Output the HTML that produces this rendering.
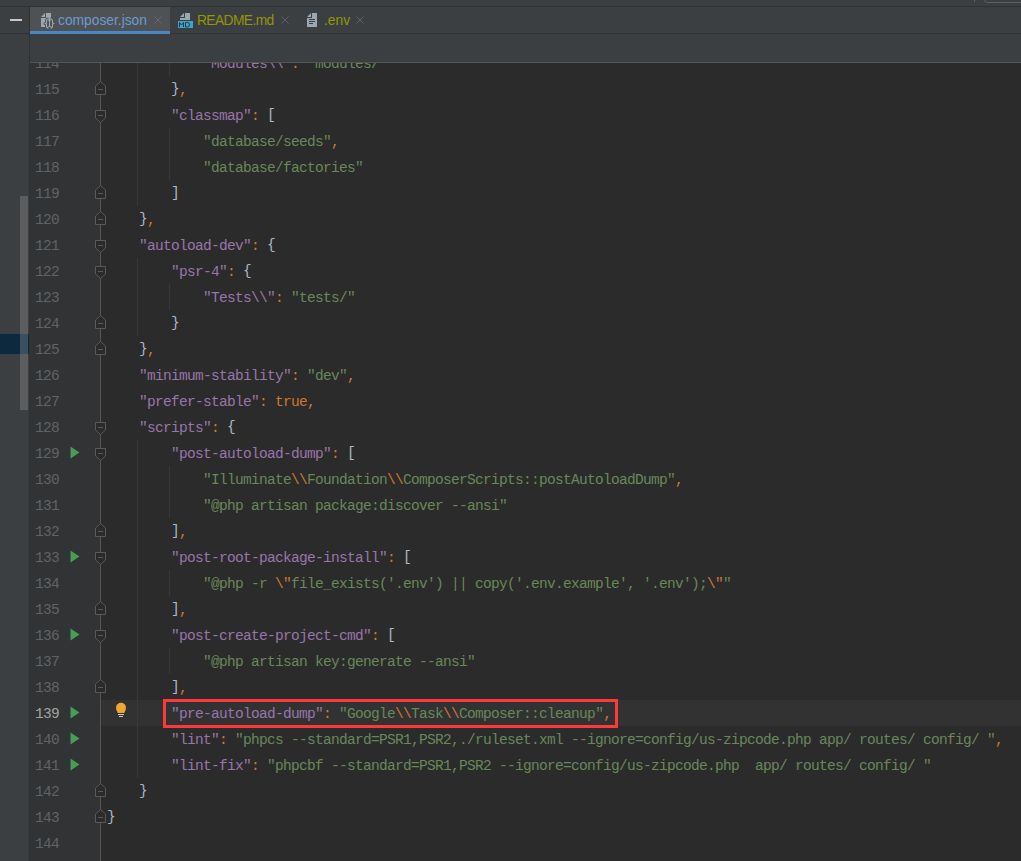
<!DOCTYPE html>
<html><head><meta charset="utf-8"><style>
*{margin:0;padding:0;box-sizing:border-box}
html,body{width:1021px;height:861px;overflow:hidden;background:#2b2b2b;position:relative}
.abs{position:absolute}
.ln{position:absolute;height:26px;line-height:26px;white-space:pre;font-family:"Liberation Mono",monospace;font-size:14.5px;letter-spacing:-0.701px}
.num{position:absolute;left:35px;width:24px;height:26px;line-height:26px;text-align:right;font-family:"Liberation Mono",monospace;font-size:14.5px;letter-spacing:-0.701px}
.tab{position:absolute;top:7.5px;height:26px;font-family:"Liberation Sans",sans-serif;font-size:13.8px;line-height:26px;white-space:pre}
</style></head><body>
<div class="abs" style="left:0;top:0;width:1021px;height:62px;background:#3c3f41"></div>
<div class="abs" style="left:0;top:6px;width:1021px;height:1px;background:#323232"></div>
<div class="abs" style="left:0;top:33px;width:1021px;height:1px;background:#323232"></div>
<div class="abs" style="left:0;top:62px;width:1021px;height:1px;background:#555555"></div>
<div class="abs" style="left:0;top:34px;width:29px;height:827px;background:#3c3f41"></div>
<div class="abs" style="left:29px;top:7px;width:1px;height:854px;background:#303030"></div>
<div class="abs" style="left:30px;top:63px;width:71px;height:798px;background:#313335"></div>
<div class="abs" style="left:101px;top:700px;width:920px;height:26px;background:#323232"></div>
<!-- active tab -->
<div class="abs" style="left:30px;top:7px;width:140px;height:24px;background:#4e5254"></div>
<div class="abs" style="left:30px;top:31px;width:140px;height:3px;background:#4a88c7"></div>
<div class="abs" style="left:10px;top:19px;width:12px;height:2px;background:#c8c8c8"></div>
<!-- left panel scrollbar -->
<div class="abs" style="left:20px;top:196px;width:8px;height:214px;background:#5c5d5f"></div>
<div class="abs" style="left:0;top:334px;width:29px;height:20px;background:#0d293e"></div>
<div class="abs" style="left:20px;top:334px;width:8px;height:20px;background:#3a4f5f"></div>
<div class="tab" style="left:58px;color:#6a9bd0">composer.json</div>
<div class="tab" style="left:197px;color:#959505;letter-spacing:-0.6px">README.md</div>
<div class="tab" style="left:324px;color:#959505">.env</div>
<svg class="abs" style="left:0;top:0" width="1021" height="861" viewBox="0 0 1021 861">
<rect x="100" y="63" width="1" height="798" fill="#555555"/>
<path d="M95.5 110.5 H105.5 V118.0 L100.5 122.5 L95.5 118.0 Z" fill="#2b2b2b" stroke="#5a5a5a"/>
<rect x="98" y="115" width="5" height="1" fill="#5a5a5a"/>
<path d="M95.5 240.5 H105.5 V248.0 L100.5 252.5 L95.5 248.0 Z" fill="#2b2b2b" stroke="#5a5a5a"/>
<rect x="98" y="245" width="5" height="1" fill="#5a5a5a"/>
<path d="M95.5 266.5 H105.5 V274.0 L100.5 278.5 L95.5 274.0 Z" fill="#2b2b2b" stroke="#5a5a5a"/>
<rect x="98" y="271" width="5" height="1" fill="#5a5a5a"/>
<path d="M95.5 422.5 H105.5 V430.0 L100.5 434.5 L95.5 430.0 Z" fill="#2b2b2b" stroke="#5a5a5a"/>
<rect x="98" y="427" width="5" height="1" fill="#5a5a5a"/>
<path d="M95.5 448.5 H105.5 V456.0 L100.5 460.5 L95.5 456.0 Z" fill="#2b2b2b" stroke="#5a5a5a"/>
<rect x="98" y="453" width="5" height="1" fill="#5a5a5a"/>
<path d="M95.5 552.5 H105.5 V560.0 L100.5 564.5 L95.5 560.0 Z" fill="#2b2b2b" stroke="#5a5a5a"/>
<rect x="98" y="557" width="5" height="1" fill="#5a5a5a"/>
<path d="M95.5 630.5 H105.5 V638.0 L100.5 642.5 L95.5 638.0 Z" fill="#2b2b2b" stroke="#5a5a5a"/>
<rect x="98" y="635" width="5" height="1" fill="#5a5a5a"/>
<path d="M100.5 81.5 L105.5 86.0 V94.5 H95.5 V86.0 Z" fill="#2b2b2b" stroke="#5a5a5a"/>
<rect x="98" y="89" width="5" height="1" fill="#5a5a5a"/>
<path d="M100.5 185.5 L105.5 190.0 V198.5 H95.5 V190.0 Z" fill="#2b2b2b" stroke="#5a5a5a"/>
<rect x="98" y="193" width="5" height="1" fill="#5a5a5a"/>
<path d="M100.5 211.5 L105.5 216.0 V224.5 H95.5 V216.0 Z" fill="#2b2b2b" stroke="#5a5a5a"/>
<rect x="98" y="219" width="5" height="1" fill="#5a5a5a"/>
<path d="M100.5 315.5 L105.5 320.0 V328.5 H95.5 V320.0 Z" fill="#2b2b2b" stroke="#5a5a5a"/>
<rect x="98" y="323" width="5" height="1" fill="#5a5a5a"/>
<path d="M100.5 341.5 L105.5 346.0 V354.5 H95.5 V346.0 Z" fill="#2b2b2b" stroke="#5a5a5a"/>
<rect x="98" y="349" width="5" height="1" fill="#5a5a5a"/>
<path d="M100.5 523.5 L105.5 528.0 V536.5 H95.5 V528.0 Z" fill="#2b2b2b" stroke="#5a5a5a"/>
<rect x="98" y="531" width="5" height="1" fill="#5a5a5a"/>
<path d="M100.5 601.5 L105.5 606.0 V614.5 H95.5 V606.0 Z" fill="#2b2b2b" stroke="#5a5a5a"/>
<rect x="98" y="609" width="5" height="1" fill="#5a5a5a"/>
<path d="M100.5 679.5 L105.5 684.0 V692.5 H95.5 V684.0 Z" fill="#2b2b2b" stroke="#5a5a5a"/>
<rect x="98" y="687" width="5" height="1" fill="#5a5a5a"/>
<path d="M100.5 783.5 L105.5 788.0 V796.5 H95.5 V788.0 Z" fill="#2b2b2b" stroke="#5a5a5a"/>
<rect x="98" y="791" width="5" height="1" fill="#5a5a5a"/>
<path d="M100.5 809.5 L105.5 814.0 V822.5 H95.5 V814.0 Z" fill="#2b2b2b" stroke="#5a5a5a"/>
<rect x="98" y="817" width="5" height="1" fill="#5a5a5a"/>
<path d="M70.5 446.5 L79.5 452.5 L70.5 458.5 Z" fill="#499c54"/>
<path d="M70.5 550.5 L79.5 556.5 L70.5 562.5 Z" fill="#499c54"/>
<path d="M70.5 628.5 L79.5 634.5 L70.5 640.5 Z" fill="#499c54"/>
<path d="M70.5 706.5 L79.5 712.5 L70.5 718.5 Z" fill="#499c54"/>
<path d="M70.5 732.5 L79.5 738.5 L70.5 744.5 Z" fill="#499c54"/>
<path d="M70.5 758.5 L79.5 764.5 L70.5 770.5 Z" fill="#499c54"/>
<rect x="137" y="62" width="1" height="144" fill="#393939"/>
<rect x="169" y="62" width="1" height="14" fill="#393939"/>
<rect x="169" y="128" width="1" height="52" fill="#393939"/>
<rect x="137" y="258" width="1" height="78" fill="#393939"/>
<rect x="169" y="284" width="1" height="26" fill="#393939"/>
<rect x="137" y="440" width="1" height="338" fill="#393939"/>
<rect x="169" y="466" width="1" height="52" fill="#393939"/>
<rect x="169" y="570" width="1" height="26" fill="#393939"/>
<rect x="169" y="648" width="1" height="26" fill="#393939"/>

<!-- json icon -->
<path d="M41 17 L45 13 V17 Z" fill="#9aa7b0"/>
<rect x="46" y="13" width="5" height="5" fill="#9aa7b0"/>
<rect x="41" y="18" width="10" height="9" fill="#9aa7b0"/>
<g fill="none" stroke-linejoin="round">
<path d="M48.5 19 Q46.5 19 46.5 21 V22.5 Q46.5 23.5 45 23.5 Q46.5 23.5 46.5 24.5 V26 Q46.5 28 48.5 28 M50.5 19 Q52.5 19 52.5 21 V22.5 Q52.5 23.5 54 23.5 Q52.5 23.5 52.5 24.5 V26 Q52.5 28 50.5 28 M49.5 21 V26" stroke="#4e5254" stroke-width="3"/>
<path d="M48.5 19 Q46.5 19 46.5 21 V22.5 Q46.5 23.5 45 23.5 Q46.5 23.5 46.5 24.5 V26 Q46.5 28 48.5 28 M50.5 19 Q52.5 19 52.5 21 V22.5 Q52.5 23.5 54 23.5 Q52.5 23.5 52.5 24.5 V26 Q52.5 28 50.5 28 M49.5 21 V26" stroke="#9aa7b0" stroke-width="1.1"/>
</g>
<!-- md icon -->
<path d="M180 17 L184 13 V17 Z" fill="#9aa7b0"/>
<rect x="185" y="13" width="5" height="7" fill="#9aa7b0"/>
<rect x="180" y="18" width="10" height="2" fill="#9aa7b0"/>
<rect x="178" y="21" width="15" height="7" fill="#3ea3cb"/>
<path d="M179.5 27 V22.5 L181.5 25 L183.5 22.5 V27 M185.5 27 V22.5 H187.5 Q189.5 22.5 189.5 24.75 Q189.5 27 187.5 27 Z" fill="none" stroke="#233c4a" stroke-width="1"/>
<!-- env icon -->
<path d="M307 17 L311 13 V17 Z" fill="#9aa7b0"/>
<rect x="312" y="13" width="5" height="5" fill="#9aa7b0"/>
<rect x="307" y="18" width="10" height="9" fill="#9aa7b0"/>
<rect x="309" y="19" width="6" height="1" fill="#3c3f41"/>
<rect x="309" y="21" width="6" height="1" fill="#3c3f41"/>
<rect x="309" y="23" width="4" height="1" fill="#3c3f41"/>
<!-- close X -->
<path d="M154.5 16.5 L161.5 23.5 M161.5 16.5 L154.5 23.5" stroke="#66696b" stroke-width="1"/>
<path d="M281.5 16.5 L288.5 23.5 M288.5 16.5 L281.5 23.5" stroke="#5f6264" stroke-width="1"/>
<path d="M356.5 16.5 L363.5 23.5 M363.5 16.5 L356.5 23.5" stroke="#5f6264" stroke-width="1"/>
<!-- top right -->
<rect x="974" y="0" width="1" height="2" fill="#5e6060"/>
<rect x="984.5" y="-5.5" width="50" height="8" rx="3" fill="none" stroke="#5e6060"/>
<!-- lightbulb -->
<path d="M116 707.8 A5 5 0 0 1 126 707.8 Q126 710.3 124.2 713 H117.8 Q116 710.3 116 707.8 Z" fill="#f0a732"/>
<rect x="118" y="714" width="6" height="1" fill="#cfcfcf"/>
<rect x="119" y="716" width="4" height="1" fill="#cfcfcf"/>
<rect x="164.5" y="700.5" width="452" height="26" fill="none" stroke="#fc3a3a" stroke-width="3"/>
</svg>
<div class="ln" style="top:51px;left:203px"><span style="color:#9876aa">&quot;</span><span style="color:#9876aa">Modules</span><span style="color:#9876aa">\\</span><span style="color:#9876aa">&quot;</span><span style="color:#cc7832">:&nbsp;</span><span style="color:#6a8759">&quot;</span><span style="color:#6a8759">modules/</span><span style="color:#6a8759">&quot;</span></div>
<div class="num" style="top:51px;color:#606366">114</div>
<div class="ln" style="top:77px;left:171px"><span style="color:#a9b7c6;position:relative;top:-1px">}</span><span style="color:#cc7832">,</span></div>
<div class="num" style="top:77px;color:#606366">115</div>
<div class="ln" style="top:103px;left:171px"><span style="color:#9876aa">&quot;classmap&quot;</span><span style="color:#cc7832">:&nbsp;</span><span style="color:#a9b7c6;position:relative;top:-1px">[</span></div>
<div class="num" style="top:103px;color:#606366">116</div>
<div class="ln" style="top:129px;left:203px"><span style="color:#6a8759">&quot;</span><span style="color:#6a8759">database/seeds</span><span style="color:#6a8759">&quot;</span><span style="color:#cc7832">,</span></div>
<div class="num" style="top:129px;color:#606366">117</div>
<div class="ln" style="top:155px;left:203px"><span style="color:#6a8759">&quot;</span><span style="color:#6a8759">database/factories</span><span style="color:#6a8759">&quot;</span></div>
<div class="num" style="top:155px;color:#606366">118</div>
<div class="ln" style="top:181px;left:171px"><span style="color:#a9b7c6;position:relative;top:-1px">]</span></div>
<div class="num" style="top:181px;color:#606366">119</div>
<div class="ln" style="top:207px;left:139px"><span style="color:#a9b7c6;position:relative;top:-1px">}</span><span style="color:#cc7832">,</span></div>
<div class="num" style="top:207px;color:#606366">120</div>
<div class="ln" style="top:233px;left:139px"><span style="color:#9876aa">&quot;autoload-dev&quot;</span><span style="color:#cc7832">:&nbsp;</span><span style="color:#a9b7c6;position:relative;top:-1px">{</span></div>
<div class="num" style="top:233px;color:#606366">121</div>
<div class="ln" style="top:259px;left:171px"><span style="color:#9876aa">&quot;psr-4&quot;</span><span style="color:#cc7832">:&nbsp;</span><span style="color:#a9b7c6;position:relative;top:-1px">{</span></div>
<div class="num" style="top:259px;color:#606366">122</div>
<div class="ln" style="top:285px;left:203px"><span style="color:#9876aa">&quot;</span><span style="color:#9876aa">Tests</span><span style="color:#9876aa">\\</span><span style="color:#9876aa">&quot;</span><span style="color:#cc7832">:&nbsp;</span><span style="color:#6a8759">&quot;</span><span style="color:#6a8759">tests/</span><span style="color:#6a8759">&quot;</span></div>
<div class="num" style="top:285px;color:#606366">123</div>
<div class="ln" style="top:311px;left:171px"><span style="color:#a9b7c6;position:relative;top:-1px">}</span></div>
<div class="num" style="top:311px;color:#606366">124</div>
<div class="ln" style="top:337px;left:139px"><span style="color:#a9b7c6;position:relative;top:-1px">}</span><span style="color:#cc7832">,</span></div>
<div class="num" style="top:337px;color:#606366">125</div>
<div class="ln" style="top:363px;left:139px"><span style="color:#9876aa">&quot;minimum-stability&quot;</span><span style="color:#cc7832">:&nbsp;</span><span style="color:#6a8759">&quot;</span><span style="color:#6a8759">dev</span><span style="color:#6a8759">&quot;</span><span style="color:#cc7832">,</span></div>
<div class="num" style="top:363px;color:#606366">126</div>
<div class="ln" style="top:389px;left:139px"><span style="color:#9876aa">&quot;prefer-stable&quot;</span><span style="color:#cc7832">:&nbsp;</span><span style="color:#cc7832">true</span><span style="color:#cc7832">,</span></div>
<div class="num" style="top:389px;color:#606366">127</div>
<div class="ln" style="top:415px;left:139px"><span style="color:#9876aa">&quot;scripts&quot;</span><span style="color:#cc7832">:&nbsp;</span><span style="color:#a9b7c6;position:relative;top:-1px">{</span></div>
<div class="num" style="top:415px;color:#606366">128</div>
<div class="ln" style="top:441px;left:171px"><span style="color:#9876aa">&quot;post-autoload-dump&quot;</span><span style="color:#cc7832">:&nbsp;</span><span style="color:#a9b7c6;position:relative;top:-1px">[</span></div>
<div class="num" style="top:441px;color:#606366">129</div>
<div class="ln" style="top:467px;left:203px"><span style="color:#6a8759">&quot;</span><span style="color:#6a8759">Illuminate</span><span style="color:#cc7832">\\</span><span style="color:#6a8759">Foundation</span><span style="color:#cc7832">\\</span><span style="color:#6a8759">ComposerScripts::postAutoloadDump</span><span style="color:#6a8759">&quot;</span><span style="color:#cc7832">,</span></div>
<div class="num" style="top:467px;color:#606366">130</div>
<div class="ln" style="top:493px;left:203px"><span style="color:#6a8759">&quot;</span><span style="color:#6a8759">@php&nbsp;artisan&nbsp;package:discover&nbsp;--ansi</span><span style="color:#6a8759">&quot;</span></div>
<div class="num" style="top:493px;color:#606366">131</div>
<div class="ln" style="top:519px;left:171px"><span style="color:#a9b7c6;position:relative;top:-1px">]</span><span style="color:#cc7832">,</span></div>
<div class="num" style="top:519px;color:#606366">132</div>
<div class="ln" style="top:545px;left:171px"><span style="color:#9876aa">&quot;post-root-package-install&quot;</span><span style="color:#cc7832">:&nbsp;</span><span style="color:#a9b7c6;position:relative;top:-1px">[</span></div>
<div class="num" style="top:545px;color:#606366">133</div>
<div class="ln" style="top:571px;left:203px"><span style="color:#6a8759">&quot;</span><span style="color:#6a8759">@php&nbsp;-r&nbsp;</span><span style="color:#cc7832">\&quot;</span><span style="color:#6a8759">file_exists(&#x27;.env&#x27;)&nbsp;||&nbsp;copy(&#x27;.env.example&#x27;,&nbsp;&#x27;.env&#x27;);</span><span style="color:#cc7832">\&quot;</span><span style="color:#6a8759">&quot;</span></div>
<div class="num" style="top:571px;color:#606366">134</div>
<div class="ln" style="top:597px;left:171px"><span style="color:#a9b7c6;position:relative;top:-1px">]</span><span style="color:#cc7832">,</span></div>
<div class="num" style="top:597px;color:#606366">135</div>
<div class="ln" style="top:623px;left:171px"><span style="color:#9876aa">&quot;post-create-project-cmd&quot;</span><span style="color:#cc7832">:&nbsp;</span><span style="color:#a9b7c6;position:relative;top:-1px">[</span></div>
<div class="num" style="top:623px;color:#606366">136</div>
<div class="ln" style="top:649px;left:203px"><span style="color:#6a8759">&quot;</span><span style="color:#6a8759">@php&nbsp;artisan&nbsp;key:generate&nbsp;--ansi</span><span style="color:#6a8759">&quot;</span></div>
<div class="num" style="top:649px;color:#606366">137</div>
<div class="ln" style="top:675px;left:171px"><span style="color:#a9b7c6;position:relative;top:-1px">]</span><span style="color:#cc7832">,</span></div>
<div class="num" style="top:675px;color:#606366">138</div>
<div class="ln" style="top:701px;left:171px"><span style="color:#9876aa">&quot;pre-autoload-dump&quot;</span><span style="color:#cc7832">:&nbsp;</span><span style="color:#6a8759">&quot;</span><span style="color:#6a8759">Google</span><span style="color:#cc7832">\\</span><span style="color:#6a8759">Task</span><span style="color:#cc7832">\\</span><span style="color:#6a8759">Composer::cleanup</span><span style="color:#6a8759">&quot;</span><span style="color:#cc7832">,</span></div>
<div class="num" style="top:701px;color:#a4a3a3">139</div>
<div class="ln" style="top:727px;left:171px"><span style="color:#9876aa">&quot;lint&quot;</span><span style="color:#cc7832">:&nbsp;</span><span style="color:#6a8759">&quot;</span><span style="color:#6a8759">phpcs&nbsp;--standard=PSR1,PSR2,./ruleset.xml&nbsp;--ignore=config/us-zipcode.php&nbsp;app/&nbsp;routes/&nbsp;config/&nbsp;</span><span style="color:#6a8759">&quot;</span><span style="color:#cc7832">,</span></div>
<div class="num" style="top:727px;color:#606366">140</div>
<div class="ln" style="top:753px;left:171px"><span style="color:#9876aa">&quot;lint-fix&quot;</span><span style="color:#cc7832">:&nbsp;</span><span style="color:#6a8759">&quot;</span><span style="color:#6a8759">phpcbf&nbsp;--standard=PSR1,PSR2&nbsp;--ignore=config/us-zipcode.php&nbsp;&nbsp;app/&nbsp;routes/&nbsp;config/&nbsp;</span><span style="color:#6a8759">&quot;</span></div>
<div class="num" style="top:753px;color:#606366">141</div>
<div class="ln" style="top:779px;left:139px"><span style="color:#a9b7c6;position:relative;top:-1px">}</span></div>
<div class="num" style="top:779px;color:#606366">142</div>
<div class="ln" style="top:805px;left:107px"><span style="color:#a9b7c6;position:relative;top:-1px">}</span></div>
<div class="num" style="top:805px;color:#606366">143</div>
<div class="num" style="top:831px;color:#606366">144</div>
<div class="abs" style="left:30px;top:34px;width:991px;height:28px;background:#3c3f41"></div>
<div class="abs" style="left:30px;top:62px;width:991px;height:1px;background:#555555"></div>
</body></html>
